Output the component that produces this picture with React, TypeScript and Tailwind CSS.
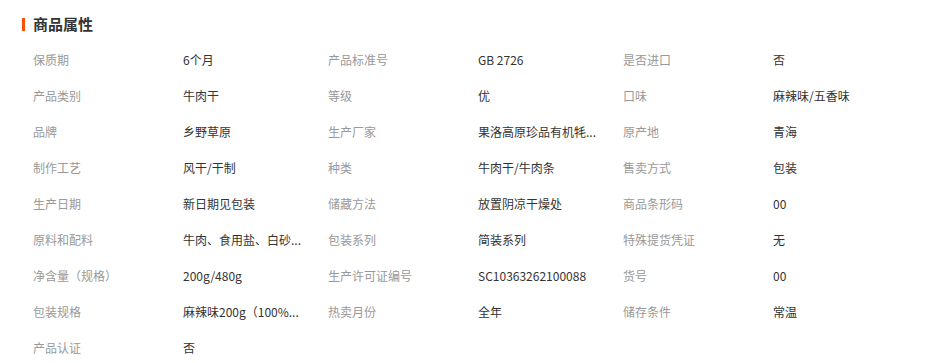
import React from "react";

const rows: [string, string][][] = [
  [["保质期", "6个月"], ["产品标准号", "GB 2726"], ["是否进口", "否"]],
  [["产品类别", "牛肉干"], ["等级", "优"], ["口味", "麻辣味/五香味"]],
  [["品牌", "乡野草原"], ["生产厂家", "果洛高原珍品有机牦..."], ["原产地", "青海"]],
  [["制作工艺", "风干/干制"], ["种类", "牛肉干/牛肉条"], ["售卖方式", "包装"]],
  [["生产日期", "新日期见包装"], ["储藏方法", "放置阴凉干燥处"], ["商品条形码", "00"]],
  [["原料和配料", "牛肉、食用盐、白砂..."], ["包装系列", "简装系列"], ["特殊提货凭证", "无"]],
  [["净含量（规格）", "200g/480g"], ["生产许可证编号", "SC10363262100088"], ["货号", "00"]],
  [["包装规格", "麻辣味200g（100%..."], ["热卖月份", "全年"], ["储存条件", "常温"]],
  [["产品认证", "否"]],
];

export default function App() {
  return (
    <div
      className="w-[931px] h-[363px] bg-white overflow-hidden"
      style={{ fontFamily: '"Noto Sans CJK SC", "Noto Sans", sans-serif' }}
    >
      <div className="flex items-center pl-[22px] pt-[13px] h-[33px]">
        <div className="w-[3px] h-[13px] bg-[#ff5000] mt-[3px]" />
        <div className="ml-[8px] text-[15px] font-bold text-[#333] leading-[20px] mt-[1px]">商品属性</div>
      </div>
      <div className="pl-[33px] pt-[9px]">
        {rows.map((r, i) => (
          <div key={i} className="flex h-[36px] items-center text-[12px]">
            {r.map(([k, v], j) => (
              <div key={j} className="flex w-[295px] items-center">
                <div className="w-[150px] text-[#999] whitespace-nowrap">{k}</div>
                <div className="w-[140px] text-[#333] whitespace-nowrap">{v}</div>
              </div>
            ))}
          </div>
        ))}
      </div>
    </div>
  );
}
